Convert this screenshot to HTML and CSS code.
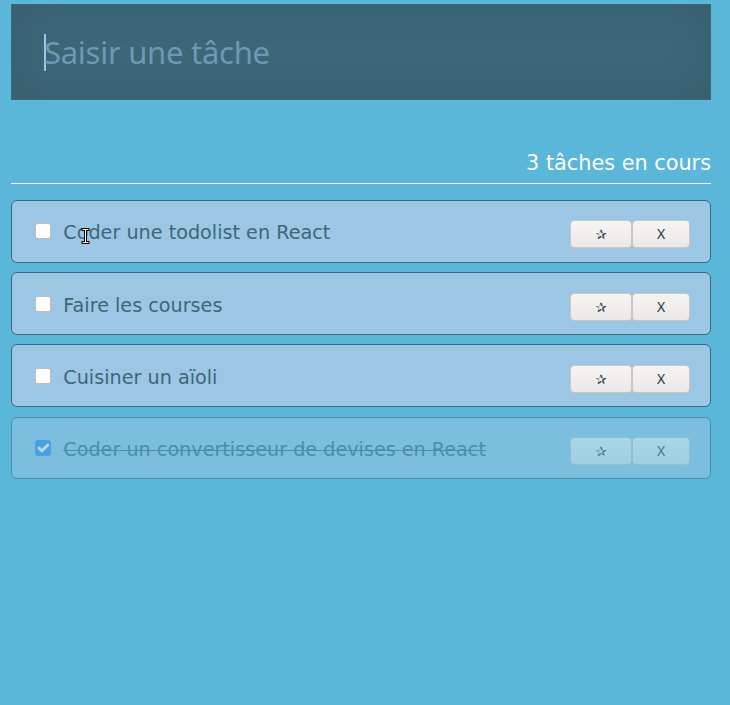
FILE: index.html
```html
<!DOCTYPE html>
<html lang="fr">
<head>
<meta charset="utf-8">
<title>Todolist</title>
<link rel="stylesheet" href="styles.css">
</head>
<body>
<main class="app">
  <div class="field"><span class="caret"></span><span class="placeholder">Saisir une tâche</span></div>
  <p class="counter"><span>3 tâches en cours</span></p>
  <ul class="tasks">
    <li class="task">
      <span class="check"></span><span class="label">Coder une todolist en React</span>
      <button class="btn star" type="button">✰</button><button class="btn" type="button">X</button>
      <svg class="cursor" width="9" height="18" viewBox="0 0 9 18"><path d="M2 2.500h5M4.500 3v12M2 15.500h5" fill="none" stroke="#000" stroke-width="3" stroke-linecap="square"/><path d="M1.500 2.500h6M4.500 2.500v13M1.500 15.500h6" fill="none" stroke="#fff"/></svg>
    </li>
    <li class="task lower">
      <span class="check"></span><span class="label">Faire les courses</span>
      <button class="btn star" type="button">✰</button><button class="btn" type="button">X</button>
    </li>
    <li class="task lower">
      <span class="check"></span><span class="label">Cuisiner un aïoli</span>
      <button class="btn star" type="button">✰</button><button class="btn" type="button">X</button>
    </li>
    <li class="task done">
      <span class="check checked"><svg width="16" height="16" viewBox="0 0 16 16"><path d="M4 8.200l3 2.600 5.800-5.800" fill="none" stroke="#fff" stroke-width="3" stroke-linecap="round"/></svg></span><span class="label">Coder un convertisseur de devises en React</span>
      <button class="btn star" type="button">✰</button><button class="btn" type="button">X</button>
    </li>
  </ul>
</main>
</body>
</html>
```
FILE: styles.css
```css
* { box-sizing: border-box; }
body {
  margin: 0;
  background: #5bb7d9;
  color: #3c6878;
  font-family: "DejaVu Sans", sans-serif;
}
.app { width: 700px; margin-left: 11px; padding-top: 4px; }
.field {
  display: flex;
  align-items: center;
  height: 96px;
  padding-left: 33px;
  background: #3c6878;
  border: 1px solid #3c6878;
  box-shadow: inset 0 -2px 45px rgba(50, 70, 82, .3);
}
.caret { width: 2px; height: 37px; margin-left: -1px; background: #9bc6e4; }
.placeholder {
  margin-left: -2px;
  color: #6b9ab4;
  font: 31px/44px "Noto Sans", sans-serif;
  letter-spacing: -0.27px;
  white-space: nowrap;
}
.counter {
  height: 84px;
  margin: 0 0 16px;
  padding-top: 49px;
  border-bottom: 1px solid #fff;
  color: #fff;
  font-size: 20.8px;
  line-height: 28px;
  text-align: right;
}
.tasks { margin: 0; padding: 0; list-style: none; }
.task {
  position: relative;
  display: flex;
  align-items: flex-start;
  height: 63px;
  margin-bottom: 9px;
  padding: 19px 20px 0 23px;
  background: #9bc6e4;
  border: 1px solid #3c6878;
  border-radius: 6px;
}
.lower { padding-top: 20px; }
.lower + .done { margin-top: 10px; }
.done { height: 62px; opacity: .5; }
.check {
  width: 16px;
  height: 16px;
  margin-top: 3px;
  background: #fff;
  border: 1px solid #c5bbb4;
  border-radius: 3px;
}
.checked { background: #3b8ce3; border: 0; }
.checked svg { display: block; }
.label {
  flex: 1;
  margin-left: 12.3px;
  font-size: 19.2px;
  line-height: 26px;
  white-space: nowrap;
}
.done .label { text-decoration: line-through; text-decoration-thickness: 1px; }
.btn {
  width: 58px;
  height: 28px;
  padding: 0;
  background: linear-gradient(#f6f5f4, #eae8e7);
  border: 1px solid #cdc5bf;
  border-radius: 4px;
  color: #2e3436;
  font: 14px/26px "Noto Sans", "DejaVu Sans", sans-serif;
}
.star { width: 62px; padding-top: 2px; font: 13.3px/24px "DejaVu Sans", sans-serif; }
.cursor { position: absolute; left: 69px; top: 26px; }
```
